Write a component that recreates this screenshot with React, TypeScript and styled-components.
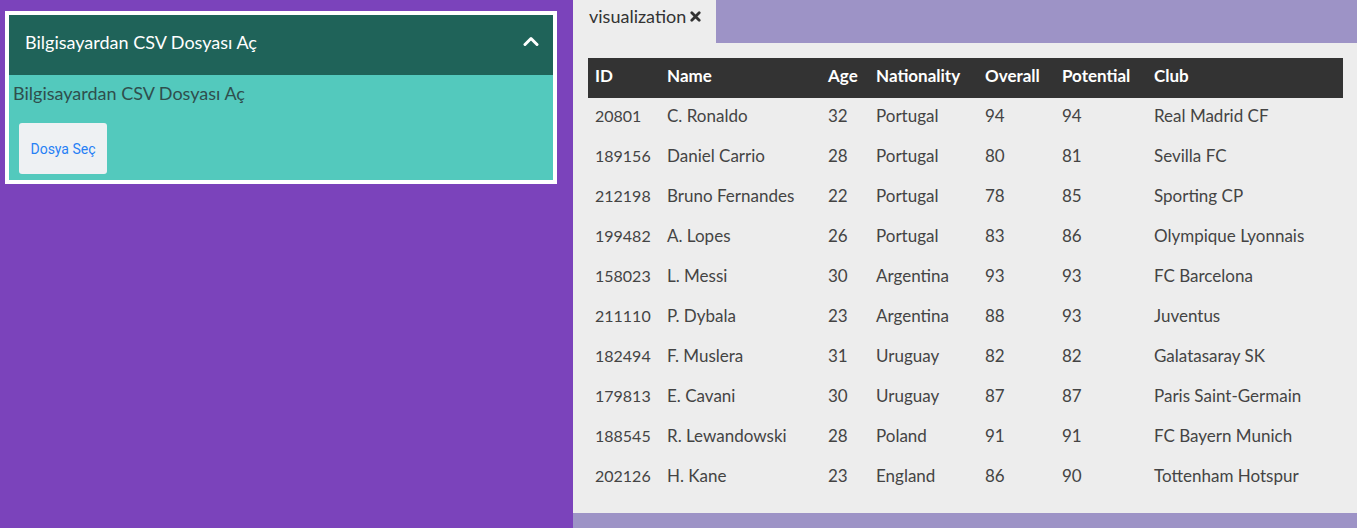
import React from "react";
import styled, { createGlobalStyle } from "styled-components";

const Global = createGlobalStyle`
  html, body { margin: 0; padding: 0; }
  body {
    background: #7b43bb;
    font-family: Lato, "Noto Sans", sans-serif;
  }
`;

const Page = styled.div`
  display: flex;
  width: 1357px;
  height: 528px;
  overflow: hidden;
`;

const Sidebar = styled.aside`
  width: 573px;
  flex: none;
  box-sizing: border-box;
  padding: 11px 16px 0 5px;
`;

const Card = styled.section`
  border: 4px solid #ffffff;
  background: #53c9bd;
`;

const CardHeader = styled.header`
  height: 60px;
  box-sizing: border-box;
  background: #1f6359;
  display: flex;
  align-items: center;
  justify-content: space-between;
  padding: 0 14px 6px 16px;
  color: #ffffff;
  font-size: 18px;
`;

const ChevronWrap = styled.span`
  display: flex;
  margin-top: -2px;
`;

const CardBody = styled.div`
  height: 105px;
  box-sizing: border-box;
  padding: 7px 4px 0;
`;

const BodyText = styled.p`
  margin: 0;
  color: #2f4f4d;
  font-size: 18px;
  line-height: 22px;
`;

const FileButton = styled.button`
  margin: 19px 0 0 6px;
  width: 88px;
  height: 51px;
  border: none;
  border-radius: 3px;
  background: #eef1f3;
  color: #2680f5;
  font-family: Roboto, "Liberation Sans", sans-serif;
  font-size: 14px;
  cursor: pointer;
`;

const Main = styled.main`
  flex: 1;
  display: flex;
  flex-direction: column;
  background: #9d93c6;
`;

const TabBar = styled.nav`
  height: 43px;
  display: flex;
  flex: none;
`;

const Tab = styled.div`
  width: 143px;
  background: #ededed;
  box-sizing: border-box;
  padding: 5px 0 0 16px;
  color: #333333;
  font-size: 18px;
  display: flex;
  align-items: flex-start;
  gap: 4px;
`;

const CloseIcon = styled.svg`
  margin-top: 6px;
  flex: none;
`;

const Content = styled.div`
  height: 470px;
  box-sizing: border-box;
  background: #ededed;
  padding: 15px 14px 15px 15px;
`;

const Table = styled.table`
  width: 100%;
  border-collapse: collapse;
  table-layout: fixed;
  font-size: 17px;
`;

const HeadCell = styled.th`
  height: 40px;
  box-sizing: border-box;
  padding: 0 0 6px 7px;
  background: #333333;
  color: #ffffff;
  text-align: left;
  font-weight: 700;
`;

const Cell = styled.td<{ $small?: boolean }>`
  height: 40px;
  box-sizing: border-box;
  padding: 0 0 6px 7px;
  color: #444444;
  font-size: ${(p) => (p.$small ? "16px" : "17px")};
  white-space: nowrap;
`;

const cols = [72, 161, 48, 109, 77, 92, 196];
const headers = ["ID", "Name", "Age", "Nationality", "Overall", "Potential", "Club"];
const rows = [
  ["20801", "C. Ronaldo", "32", "Portugal", "94", "94", "Real Madrid CF"],
  ["189156", "Daniel Carrio", "28", "Portugal", "80", "81", "Sevilla FC"],
  ["212198", "Bruno Fernandes", "22", "Portugal", "78", "85", "Sporting CP"],
  ["199482", "A. Lopes", "26", "Portugal", "83", "86", "Olympique Lyonnais"],
  ["158023", "L. Messi", "30", "Argentina", "93", "93", "FC Barcelona"],
  ["211110", "P. Dybala", "23", "Argentina", "88", "93", "Juventus"],
  ["182494", "F. Muslera", "31", "Uruguay", "82", "82", "Galatasaray SK"],
  ["179813", "E. Cavani", "30", "Uruguay", "87", "87", "Paris Saint-Germain"],
  ["188545", "R. Lewandowski", "28", "Poland", "91", "91", "FC Bayern Munich"],
  ["202126", "H. Kane", "23", "England", "86", "90", "Tottenham Hotspur"],
];

const Chevron = () => (
  <svg width="16" height="12" viewBox="0 0 16 12" aria-hidden="true">
    <polyline
      points="2,9.5 8,3.5 14,9.5"
      fill="none"
      stroke="#ffffff"
      strokeWidth="3"
      strokeLinecap="round"
      strokeLinejoin="round"
    />
  </svg>
);

export default function App() {
  return (
    <>
      <Global />
      <Page>
        <Sidebar>
          <Card>
            <CardHeader>
              <span>Bilgisayardan CSV Dosyası Aç</span>
              <ChevronWrap>
                <Chevron />
              </ChevronWrap>
            </CardHeader>
            <CardBody>
              <BodyText>Bilgisayardan CSV Dosyası Aç</BodyText>
              <FileButton>Dosya Seç</FileButton>
            </CardBody>
          </Card>
        </Sidebar>
        <Main>
          <TabBar>
            <Tab>
              <span>visualization</span>
              <CloseIcon width="11" height="11" viewBox="0 0 11 11" aria-hidden="true">
                <path d="M1.8 1.8 L9.2 9.2 M9.2 1.8 L1.8 9.2" stroke="#333333" strokeWidth="2.8" strokeLinecap="round" />
              </CloseIcon>
            </Tab>
          </TabBar>
          <Content>
            <Table>
              <colgroup>
                {cols.map((w, i) => (
                  <col key={i} style={{ width: w }} />
                ))}
              </colgroup>
              <thead>
                <tr>
                  {headers.map((h) => (
                    <HeadCell key={h}>{h}</HeadCell>
                  ))}
                </tr>
              </thead>
              <tbody>
                {rows.map((r) => (
                  <tr key={r[0]}>
                    {r.map((c, i) => (
                      <Cell key={i} $small={i === 0}>
                        {c}
                      </Cell>
                    ))}
                  </tr>
                ))}
              </tbody>
            </Table>
          </Content>
        </Main>
      </Page>
    </>
  );
}
